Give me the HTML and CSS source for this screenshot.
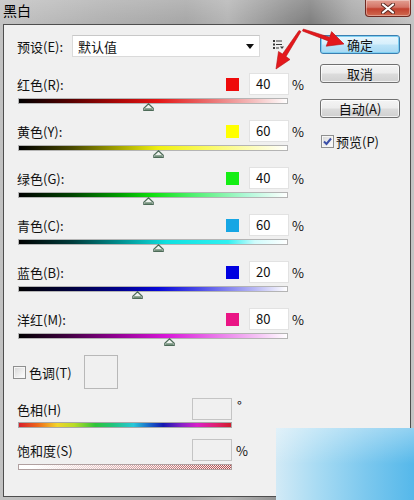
FILE: index.html
```html
<!DOCTYPE html>
<html>
<head>
<meta charset="utf-8">
<link rel="stylesheet" href="styles.css">
</head>
<body>
<div class="window">
  <div class="titlebar">
    <span class="title">黑白</span>
    <span class="close"><svg width="14" height="11" viewBox="0 0 14 11"><path d="M2 1.5 L12 9.5 M12 1.5 L2 9.5" stroke="#5a2a22" stroke-width="4" stroke-linecap="round"/><path d="M2 1.5 L12 9.5 M12 1.5 L2 9.5" stroke="#fff" stroke-width="2.2" stroke-linecap="round"/></svg></span>
  </div>
  <div class="panel">
    <div class="form">
      <div class="preset">
        <span class="plabel">预设(E):</span>
        <div class="select"><span>默认值</span><svg class="sel-arrow" width="8" height="5" viewBox="0 0 8 5"><path d="M0 0 H8 L4 5 Z" fill="#111"/></svg></div>
        <svg class="list-icon" width="11" height="9" viewBox="0 0 11 9"><g fill="#3a3a3a"><rect x="0" y="0" width="2" height="2"/><rect x="3" y="0.5" width="6" height="1"/><rect x="0" y="3.5" width="2" height="2"/><rect x="3" y="4" width="6" height="1"/><rect x="0" y="7" width="2" height="2"/><rect x="3" y="7.5" width="3" height="1"/><path d="M7 6.5 H11 L9 9 Z"/></g></svg>
      </div>

      <div class="slider first">
        <div class="stop"><span class="slabel">红色(R):</span><span class="swatch sw-red"></span><span class="num">40</span><span class="unit">%</span></div>
        <div class="bar bar-red"></div>
        <div class="track"><svg class="thumb" style="left:48%" width="11" height="8" viewBox="0 0 11 8"><path d="M5.5 0.8 L10.2 5.2 V7.3 H0.8 V5.2 Z" fill="#eef2ee" stroke="#4d6b58" stroke-width="1.2"/><rect x="2" y="5.3" width="7" height="1.6" fill="#6b8a74"/></svg></div>
      </div>
      <div class="slider">
        <div class="stop"><span class="slabel">黄色(Y):</span><span class="swatch sw-yellow"></span><span class="num">60</span><span class="unit">%</span></div>
        <div class="bar bar-yellow"></div>
        <div class="track"><svg class="thumb" style="left:52%" width="11" height="8" viewBox="0 0 11 8"><path d="M5.5 0.8 L10.2 5.2 V7.3 H0.8 V5.2 Z" fill="#eef2ee" stroke="#4d6b58" stroke-width="1.2"/><rect x="2" y="5.3" width="7" height="1.6" fill="#6b8a74"/></svg></div>
      </div>
      <div class="slider">
        <div class="stop"><span class="slabel">绿色(G):</span><span class="swatch sw-green"></span><span class="num">40</span><span class="unit">%</span></div>
        <div class="bar bar-green"></div>
        <div class="track"><svg class="thumb" style="left:48%" width="11" height="8" viewBox="0 0 11 8"><path d="M5.5 0.8 L10.2 5.2 V7.3 H0.8 V5.2 Z" fill="#eef2ee" stroke="#4d6b58" stroke-width="1.2"/><rect x="2" y="5.3" width="7" height="1.6" fill="#6b8a74"/></svg></div>
      </div>
      <div class="slider">
        <div class="stop"><span class="slabel">青色(C):</span><span class="swatch sw-cyan"></span><span class="num">60</span><span class="unit">%</span></div>
        <div class="bar bar-cyan"></div>
        <div class="track"><svg class="thumb" style="left:52%" width="11" height="8" viewBox="0 0 11 8"><path d="M5.5 0.8 L10.2 5.2 V7.3 H0.8 V5.2 Z" fill="#eef2ee" stroke="#4d6b58" stroke-width="1.2"/><rect x="2" y="5.3" width="7" height="1.6" fill="#6b8a74"/></svg></div>
      </div>
      <div class="slider">
        <div class="stop"><span class="slabel">蓝色(B):</span><span class="swatch sw-blue"></span><span class="num">20</span><span class="unit">%</span></div>
        <div class="bar bar-blue"></div>
        <div class="track"><svg class="thumb" style="left:44%" width="11" height="8" viewBox="0 0 11 8"><path d="M5.5 0.8 L10.2 5.2 V7.3 H0.8 V5.2 Z" fill="#eef2ee" stroke="#4d6b58" stroke-width="1.2"/><rect x="2" y="5.3" width="7" height="1.6" fill="#6b8a74"/></svg></div>
      </div>
      <div class="slider">
        <div class="stop"><span class="slabel">洋红(M):</span><span class="swatch sw-magenta"></span><span class="num">80</span><span class="unit">%</span></div>
        <div class="bar bar-magenta"></div>
        <div class="track"><svg class="thumb" style="left:56%" width="11" height="8" viewBox="0 0 11 8"><path d="M5.5 0.8 L10.2 5.2 V7.3 H0.8 V5.2 Z" fill="#eef2ee" stroke="#4d6b58" stroke-width="1.2"/><rect x="2" y="5.3" width="7" height="1.6" fill="#6b8a74"/></svg></div>
      </div>

      <div class="tone">
        <span class="cb"></span>
        <span class="tlabel">色调(T)</span>
        <span class="tone-box"></span>
      </div>

      <div class="hs hue">
        <div class="hs-top"><span class="hs-label">色相(H)</span><span class="dnum"></span><span class="deg">°</span></div>
        <div class="hbar"></div>
      </div>
      <div class="hs sat">
        <div class="hs-top"><span class="hs-label">饱和度(S)</span><span class="dnum"></span><span class="pct">%</span></div>
        <div class="sbar"></div>
      </div>
    </div>

    <div class="side">
      <div class="btn btn-default">确定</div>
      <div class="btn btn-cancel">取消</div>
      <div class="btn btn-auto">自动(A)</div>
      <div class="preview"><span class="cb cb-on"><svg width="11" height="11" viewBox="0 0 11 11"><path d="M2 5.5 L4.5 8 L9 2.5" fill="none" stroke="#3b4fa8" stroke-width="2"/></svg></span><span>预览(P)</span></div>
    </div>
  </div>
  <div class="watermark"></div>
  <svg class="arrows" width="414" height="80" viewBox="0 0 414 80">
    <path d="M301 31.5 L286 56.5 L290 59.5 L276 69 L278.5 51.5 L282.5 54 L299 30.5 Z" fill="#e4181c" stroke="#b80f12" stroke-width="0.6"/>
    <path d="M302.5 31 L328.2 40.9 L326.2 46.2 L344 44 L331.6 31.6 L329.6 37.2 L303.3 29 Z" fill="#e4181c" stroke="#b80f12" stroke-width="0.6"/>
  </svg>
</div>
</body>
</html>
```

FILE: styles.css
```css
* { box-sizing: border-box; }

body {
  margin: 0;
  width: 414px;
  height: 500px;
  overflow: hidden;
  font-family: "Noto Sans CJK SC", "Liberation Sans", sans-serif;
  font-size: 13px;
  color: #111;
}

.window {
  position: relative;
  width: 414px;
  height: 500px;
  display: flex;
  flex-direction: column;
  padding: 0 3px 3px;
  background:
    linear-gradient(180deg, rgba(255,255,255,0.18), rgba(255,255,255,0) 24px),
    linear-gradient(90deg, #c2c2c2 0%, #b0b0b0 25%, #a6a6a6 45%, #b4b4b4 55%, #8a8a8a 70%, #7e7e7e 75%, #a8a8a8 85%, #c4c4c4 100%);
}

.titlebar {
  flex: none;
  height: 24px;
  display: flex;
  justify-content: space-between;
  align-items: flex-start;
}

.title {
  font-size: 14px;
  line-height: 18px;
  margin-top: 1px;
  color: #000;
}

.close {
  width: 46px;
  height: 17px;
  display: flex;
  align-items: center;
  justify-content: center;
  border: 1px solid #6e2a22;
  border-top: none;
  border-radius: 0 0 4px 4px;
  background: linear-gradient(180deg, #e3a093 0%, #d47466 45%, #c2412f 55%, #d06a50 100%);
  box-shadow: inset 0 0 0 1px rgba(255,255,255,0.35);
}

.panel {
  flex: 1;
  display: flex;
  background: #f0f0f0;
  border: 1px solid #4e4e4e;
}

.form {
  width: 300px;
  padding: 10px 0 0 14px;
}

.preset {
  display: flex;
  align-items: center;
  height: 22px;
}

.plabel {
  width: 55px;
  margin-left: -1px;
}

.select {
  width: 188px;
  height: 22px;
  display: flex;
  align-items: center;
  justify-content: space-between;
  padding: 0 5px 0 5px;
  background: #fff;
  border: 1px solid #dadada;
  border-top-color: #c8c8c8;
}

.sel-arrow { margin-top: 1px; }

.list-icon { margin-left: 13px; margin-top: -3px; }

.slider {
  width: 286px;
  margin-bottom: 9px;
}

.slider.first { margin-top: 16px; }

.stop {
  display: flex;
  align-items: center;
  height: 22px;
}

.slabel {
  flex: 1;
  margin-left: -1px;
}

.swatch {
  width: 13px;
  height: 13px;
  margin-right: 10px;
}

.sw-red { background: #ee0a0a; }
.sw-yellow { background: #ffff00; }
.sw-green { background: #14ee14; }
.sw-cyan { background: #16a6e4; }
.sw-blue { background: #0000e0; }
.sw-magenta { background: #ea1585; }

.num {
  width: 40px;
  height: 22px;
  line-height: 20px;
  padding-left: 6px;
  background: #fff;
  border: 1px solid #e2e2e2;
  font-size: 13px;
}

.unit {
  margin-left: 3px;
  font-size: 13px;
}

.bar {
  width: 270px;
  height: 6px;
  margin-top: 3px;
  border: 1px solid #b4b4b4;
}

.bar-red { background: linear-gradient(90deg, #000 0%, #5a0000 20%, #b00808 38%, #e41616 52%, #ea6a6a 70%, #f5c0c0 88%, #fff 100%); }
.bar-yellow { background: linear-gradient(90deg, #000 0%, #4a4a00 20%, #a8a800 38%, #f0f010 52%, #fafa60 70%, #fdfdc0 88%, #fff 100%); }
.bar-green { background: linear-gradient(90deg, #000 0%, #004400 20%, #00a000 38%, #10e010 50%, #50f070 65%, #b0f8d8 85%, #fff 100%); }
.bar-cyan { background: linear-gradient(90deg, #000 0%, #003c3c 20%, #009090 38%, #10e0e0 55%, #30f0f0 78%, #d0fcfc 88%, #fff 100%); }
.bar-blue { background: linear-gradient(90deg, #000 0%, #000040 20%, #000090 38%, #0808d8 52%, #5050e8 68%, #b8b8f4 88%, #fff 100%); }
.bar-magenta { background: linear-gradient(90deg, #000 0%, #400040 18%, #900090 36%, #d818d8 55%, #e870e8 72%, #f6c8f6 90%, #fff 100%); }

.track {
  position: relative;
  width: 270px;
  height: 7px;
}

.thumb {
  position: absolute;
  top: -1px;
  margin-left: -5px;
}

.tone {
  display: flex;
  align-items: center;
  height: 34px;
  margin-top: 1px;
}

.cb {
  width: 13px;
  height: 13px;
  display: inline-flex;
  align-items: center;
  justify-content: center;
  border: 1px solid #8e8f8f;
  background: linear-gradient(135deg, #d6d6d6 0%, #f4f4f4 70%, #ffffff 100%);
  box-shadow: inset 0 0 0 1px #f6f6f6;
}

.tone .cb { margin-left: -5px; }

.tlabel { margin-left: 3px; }

.tone-box {
  width: 34px;
  height: 34px;
  margin-left: 12px;
  border: 1px solid #b8b8b8;
  background: #f0f0f0;
}

.hs { width: 240px; }

.hue { margin-top: 9px; }
.sat { margin-top: 11px; }

.hs-top {
  display: flex;
  align-items: center;
  height: 22px;
}

.hs-label {
  width: 174px;
  margin-left: -1px;
}

.dnum {
  width: 40px;
  height: 22px;
  margin-left: 1px;
  background: #f0f0f0;
  border: 1px solid #c4c4c4;
}

.deg {
  align-self: flex-start;
  margin-left: 5px;
  line-height: 16px;
  font-size: 13px;
}

.pct { margin-left: 4px; }

.hbar {
  width: 214px;
  height: 6px;
  margin-top: 2px;
  border: 1px solid #a8a8a8;
  background: linear-gradient(90deg, #d8202c 0%, #ee6a1a 9%, #f2d42a 18%, #b8dc28 26%, #2ec43a 36%, #22c47a 44%, #28c8d8 54%, #1860c8 62%, #1418b0 68%, #8a22c8 77%, #d820c8 84%, #e02070 93%, #d01c2c 100%);
}

.sbar {
  width: 214px;
  height: 6px;
  margin-top: 3px;
  border: 1px solid #b0a0a0;
  background:
    linear-gradient(90deg, #fff 0%, #fff 6%, rgba(255,255,255,0) 100%),
    repeating-conic-gradient(#b04848 0 25%, #f6eaea 0 50%) 0 0 / 2px 2px;
}

.side {
  width: 80px;
  margin-left: 16px;
  padding-top: 10px;
  display: flex;
  flex-direction: column;
}

.btn {
  height: 19px;
  display: flex;
  align-items: center;
  justify-content: center;
  border: 1px solid #707070;
  border-radius: 3px;
  background: linear-gradient(180deg, #f4f4f4 0%, #ececec 48%, #dcdcdc 52%, #d0d0d0 100%);
  box-shadow: inset 0 0 0 1px rgba(255,255,255,0.7);
  font-size: 13px;
  line-height: 1;
}

.btn-default {
  border-color: #3c7fb1;
  background: linear-gradient(180deg, #e8f6fd 0%, #d6effc 48%, #bde4f8 52%, #a6d8f3 100%);
  box-shadow: inset 0 0 0 1px #7fd0f2;
}

.btn-cancel { margin-top: 10px; }
.btn-auto { margin-top: 16px; }

.preview {
  display: flex;
  align-items: center;
  margin-top: 14px;
  margin-left: 1px;
  gap: 2px;
}

.watermark {
  position: absolute;
  left: 276px;
  top: 428px;
  right: 0;
  bottom: 0;
  background:
    linear-gradient(180deg, rgba(255,255,255,0.35) 0%, rgba(255,255,255,0) 50%),
    linear-gradient(90deg, #d2eaf6 0%, #a8dbf3 30%, #7cc8ee 65%, #55b8ea 100%);
}

.arrows {
  position: absolute;
  left: 0;
  top: 0;
  pointer-events: none;
}
```
